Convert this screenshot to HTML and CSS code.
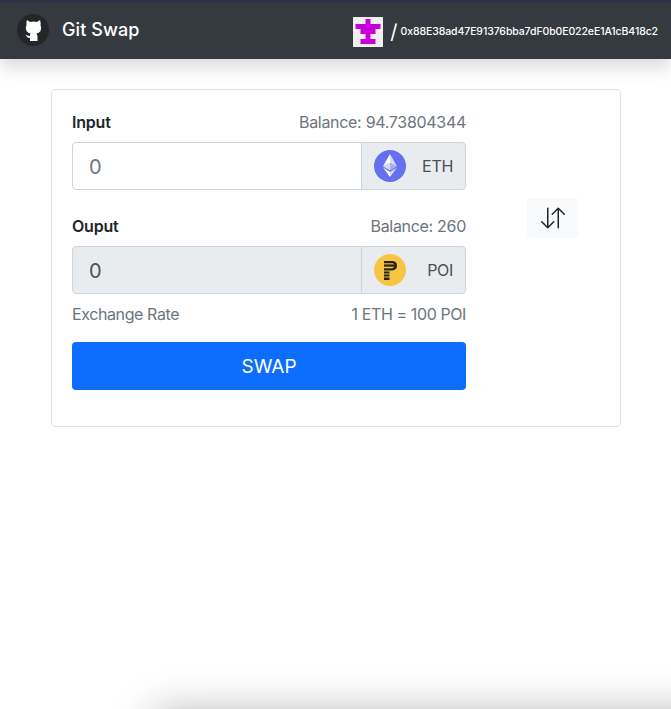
FILE: index.html
```html
<!DOCTYPE html>
<html lang="en">
<head>
    <meta charset="UTF-8">
    <meta name="viewport" content="width=device-width, initial-scale=1.0">
    <title>Git Swap</title>
    <link rel="stylesheet" href="styles.css">
</head>
<body>
    <nav class="navbar">
        <div class="brand">
            <svg class="brand-logo" viewBox="0 0 32 32" width="32" height="32">
                <circle cx="16" cy="16" r="16" fill="#24272a"/>
                <path fill="#fff" d="M10 6 L13 8 Q16.5 7 20 8 L23 6 Q24 9 23.5 11 Q25 14 23.5 17 Q22 19 19.5 19.5 Q20.5 21 20.5 23 L20.5 27 L13 27 L13 24 Q10 24 8.5 20.5 Q11 22 13 22 Q13 20 13.5 19.5 Q11 19 9.5 17 Q8 14 9.5 11 Q9 8 10 6z"/>
            </svg>
            <span class="brand-name">Git Swap</span>
        </div>
        <div class="account">
            <svg class="identicon" viewBox="0 0 30 30" width="30" height="30">
                <rect width="30" height="30" fill="#f0f0f0"/>
                <g fill="#c800d8">
                    <rect x="12.500" y="2" width="5" height="5"/>
                    <rect x="2.500" y="7" width="25" height="5"/>
                    <rect x="7.500" y="12" width="15" height="5"/>
                    <rect x="12.500" y="17" width="5" height="5"/>
                    <rect x="7.500" y="22" width="15" height="5"/>
                </g>
            </svg>
            <span class="slash">/</span>
            <span class="address">0x88E38ad47E91376bba7dF0b0E022eE1A1cB418c2</span>
        </div>
    </nav>

    <div class="container">
        <div class="card">
            <div class="swap-form">
                <div class="field-head">
                    <label class="field-label" for="input_amount">Input</label>
                    <span class="muted">Balance: 94.73804344</span>
                </div>
                <div class="input-group">
                    <input type="text" id="input_amount" class="amount" placeholder="0">
                    <div class="token">
                        <svg class="token-icon" viewBox="0 0 32 32" width="32" height="32">
                            <circle cx="16" cy="16" r="16" fill="#6570ee"/>
                            <path fill="#fff" fill-opacity=".75" d="M16 4v8.900l7 3.300z"/>
                            <path fill="#fff" d="M16 4 9 16.200l7-3.300z"/>
                            <path fill="#fff" fill-opacity=".75" d="M16 22v5l7-9.400z"/>
                            <path fill="#fff" d="M16 27v-5l-7-4.400z"/>
                            <path fill="#fff" fill-opacity=".45" d="m16 20.600 7-4.400-7-3.300z"/>
                            <path fill="#fff" fill-opacity=".75" d="m9 16.200 7 4.400v-7.700z"/>
                        </svg>
                        <span class="token-name">ETH</span>
                    </div>
                </div>

                <div class="field-head second">
                    <label class="field-label" for="output_amount">Ouput</label>
                    <span class="muted">Balance: 260</span>
                </div>
                <div class="input-group">
                    <input type="text" id="output_amount" class="amount" value="0" disabled>
                    <div class="token">
                        <svg class="token-icon" viewBox="0 0 32 32" width="32" height="32">
                            <circle cx="16" cy="16" r="16" fill="#f6c544"/>
                            <g fill="#2b2410">
                                <path d="M10 7h8q5 0 5 4.600T18 16.500h-8v-2.300h8q2.200 0 2.200-2.600T18 9.200h-8z"/>
                                <rect x="10" y="10.400" width="10" height="2.300"/>
                                <rect x="10" y="17.500" width="5.500" height="2"/>
                                <rect x="10" y="20.500" width="5.500" height="2"/>
                                <rect x="10" y="23.500" width="5.500" height="2.500"/>
                            </g>
                        </svg>
                        <span class="token-name">POI</span>
                    </div>
                </div>

                <div class="rate-row">
                    <span>Exchange Rate</span>
                    <span>1 ETH = 100 POI</span>
                </div>

                <button class="swap-button">SWAP</button>
            </div>

            <div class="flip-col">
                <button class="flip-button" aria-label="Flip tokens">
                    <svg viewBox="0 0 16 16" width="24" height="24" fill="#212529">
                        <path fill-rule="evenodd" d="M11.500 15a.5.5 0 0 0 .5-.5V2.707l3.146 3.147a.5.5 0 0 0 .708-.708l-4-4a.5.5 0 0 0-.708 0l-4 4a.5.5 0 1 0 .708.708L11 2.707V14.500a.5.5 0 0 0 .5.5zm-7-14a.5.5 0 0 1 .5.5v11.793l3.146-3.147a.5.5 0 0 1 .708.708l-4 4a.5.5 0 0 1-.708 0l-4-4a.5.5 0 0 1 .708-.708L4 13.293V1.500a.5.5 0 0 1 .5-.5z"/>
                    </svg>
                </button>
            </div>
        </div>
    </div>

    <div class="window-shadow"></div>
</body>
</html>
```

FILE: styles.css
```css
* {
    box-sizing: border-box;
}

html, body {
    height: 100%;
}

body {
    font-family: Inter, "Liberation Sans", sans-serif;
    font-size: 16px;
    line-height: 24px;
    color: #212529;
    background-color: #fff;
    margin: 0;
    overflow: hidden;
}

.navbar {
    display: flex;
    justify-content: space-between;
    align-items: center;
    height: 59px;
    padding: 0 13px 0 17px;
    background-color: #343a40;
    border-top: 3px solid #2f3346;
    box-shadow: 0 8px 16px rgba(0, 0, 0, 0.15);
}

.brand, .account {
    display: flex;
    align-items: center;
}

.brand {
    gap: 13px;
    margin-top: -3px;
}

.brand-name {
    color: #fff;
    font-size: 18px;
    font-weight: 500;
    letter-spacing: 0.1px;
}

.account {
    margin-top: 1px;
}

.identicon {
    display: block;
    margin-right: 7px;
}

.slash {
    color: #fff;
    font-size: 20px;
    margin-right: 3px;
}

.address {
    color: #fff;
    font-size: 10.500px;
    font-weight: 500;
    letter-spacing: -0.1px;
}

.container {
    padding: 30px 50px 0 51px;
}

.card {
    display: flex;
    gap: 39px;
    height: 338px;
    padding: 20px;
    border: 1px solid #dfe2e5;
    border-radius: 4px;
}

.swap-form {
    width: 394px;
}

.field-head, .rate-row {
    display: flex;
    justify-content: space-between;
}

.field-head {
    margin-bottom: 8px;
}

.field-head.second {
    margin-top: 24px;
}

.field-label {
    font-weight: 600;
    letter-spacing: -0.2px;
}

.muted, .rate-row {
    color: #6c757d;
    letter-spacing: -0.3px;
}

.input-group {
    display: flex;
    height: 48px;
}

.amount {
    flex: 1;
    min-width: 0;
    padding: 10px 16px 8px;
    font-family: inherit;
    font-size: 20px;
    color: #495057;
    background: #fff;
    border: 1px solid #ced4da;
    border-radius: 4px 0 0 4px;
    outline: none;
}

.amount::placeholder {
    color: #6c757d;
}

.amount:disabled {
    background-color: #e9ecef;
    opacity: 1;
}

.token {
    display: flex;
    align-items: center;
    justify-content: space-between;
    width: 105px;
    margin-left: -1px;
    padding: 0 12px;
    background-color: #e9ecef;
    border: 1px solid #ced4da;
    border-radius: 0 4px 4px 0;
}

.token-name {
    color: #495057;
    letter-spacing: -0.3px;
}

.rate-row {
    margin-top: 8px;
    letter-spacing: -0.4px;
}

.swap-button {
    display: block;
    width: 100%;
    height: 48px;
    margin-top: 16px;
    font-family: inherit;
    font-size: 19px;
    color: #fff;
    background-color: #0d6efd;
    border: none;
    border-radius: 4px;
}

.flip-col {
    display: flex;
    justify-content: center;
    width: 95px;
    padding-top: 88px;
}

.flip-button {
    display: flex;
    align-items: center;
    justify-content: center;
    width: 51px;
    height: 40px;
    padding: 0;
    background-color: #f8f9fa;
    border: none;
    border-radius: 4px;
}

/* shadow of the window behind, coming up from the bottom edge */
.window-shadow {
    position: fixed;
    left: 162px;
    right: -60px;
    top: 722px;
    height: 60px;
    box-shadow: 0 0 44px 8px rgba(0, 0, 0, 0.32);
}
```
